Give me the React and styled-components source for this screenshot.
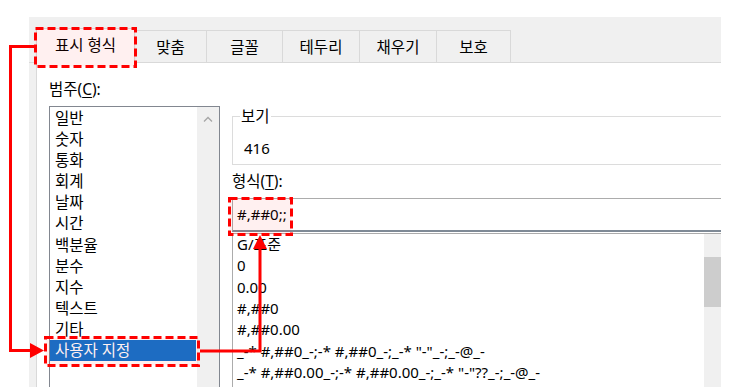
import React from "react";
import styled, { createGlobalStyle } from "styled-components";

const Global = createGlobalStyle`
  html, body { margin: 0; padding: 0; background: #fff; }
  body { font-family: "Noto Sans", "Noto Sans CJK KR", sans-serif; color: #000; }
`;

const Page = styled.div`
  position: relative;
  width: 735px;
  height: 387px;
  overflow: hidden;
  box-sizing: border-box;
  padding: 17px 14px 0 29px;
`;

const Dialog = styled.div`
  height: 100%;
  background: #f0f0f0;
  display: flex;
  flex-direction: column;
`;

const TabBar = styled.div`
  height: 46px;
  box-sizing: border-box;
  display: flex;
  align-items: flex-end;
  padding-left: 8px;
  border-bottom: 1px solid #d9d9d9;
`;

const Tab = styled.div`
  width: ${(p) => p.w}px;
  height: ${(p) => (p.active ? 35 : 32)}px;
  margin-bottom: ${(p) => (p.active ? -1 : 0)}px;
  margin-left: -1px;
  box-sizing: border-box;
  border: 1px solid #d9d9d9;
  border-bottom: none;
  background: ${(p) => (p.active ? "#fff" : "#f0f0f0")};
  display: flex;
  align-items: center;
  justify-content: center;
  font-size: 15.5px;
  padding-bottom: ${(p) => (p.active ? 3 : 0)}px;
`;

const Panel = styled.div`
  flex: 1;
  margin-left: 7px;
  background: #fff;
  border-left: 1px solid #d9d9d9;
  display: grid;
  grid-template-columns: 171px 1fr;
  column-gap: 12px;
  padding-left: 12px;
  min-height: 0;
`;

const Column = styled.div`
  display: flex;
  flex-direction: column;
  padding-top: ${(p) => p.top}px;
  min-height: 0;
`;

const Label = styled.div`
  font-size: 15.5px;
  line-height: 20px;
  margin-top: ${(p) => p.lift || 0}px;
  margin-bottom: ${(p) => p.gap}px;
  u { text-decoration: underline; text-underline-offset: 2px; }
`;

const ListBox = styled.div`
  flex: 1;
  border: 1px solid ${(p) => p.edge};
  border-bottom: none;
  border-right: ${(p) => (p.open ? "none" : `1px solid ${p.edge}`)};
  display: flex;
  min-height: 0;
`;

const Items = styled.div`
  flex: 1;
  padding-top: ${(p) => p.top}px;
`;

const Item = styled.div`
  height: ${(p) => p.h}px;
  line-height: ${(p) => p.h}px;
  font-size: ${(p) => p.size}px;
  padding-left: ${(p) => p.pad}px;
  margin-right: ${(p) => p.right}px;
  white-space: nowrap;
  background: ${(p) => (p.selected ? "#0f73cf" : "transparent")};
  color: ${(p) => (p.selected ? "#fff" : "#000")};
`;

const ScrollTrack = styled.div`
  width: ${(p) => p.w}px;
  background: #f0f0f0;
  display: flex;
  flex-direction: column;
  align-items: center;
`;

const Arrow = styled.div`
  height: 24px;
  display: flex;
  align-items: center;
  justify-content: center;
`;

const Thumb = styled.div`
  width: 100%;
  height: 50px;
  margin-top: 23px;
  background: #cdcdcd;
`;

const Group = styled.fieldset`
  margin: 0;
  padding: 0 0 6px 7px;
  border: 1px solid #dcdcdc;
  border-right: none;
  min-width: 0;
  legend {
    padding: 0 1px;
    font-size: 15.5px;
    line-height: 20px;
  }
`;

const Preview = styled.div`
  font-size: 15px;
  line-height: 20px;
  padding: 12px 0 0 4px;
`;

const Input = styled.div`
  height: 34px;
  box-sizing: border-box;
  border: 1px solid #acacac;
  border-bottom: 2px solid #7f8a96;
  border-right: none;
  font-size: 15px;
  line-height: 30px;
  padding-left: 4px;
  margin-bottom: 1px;
`;

const Overlay = styled.svg`
  position: absolute;
  left: 0;
  top: 0;
  pointer-events: none;
`;

const tabs = [
  ["표시 형식", 99],
  ["맞춤", 73],
  ["글꼴", 77],
  ["테두리", 78],
  ["채우기", 78],
  ["보호", 75],
];

const categories = [
  "일반", "숫자", "통화", "회계", "날짜", "시간", "백분율",
  "분수", "지수", "텍스트", "기타", "사용자 지정",
];

const formats = [
  "G/표준",
  "0",
  "0.00",
  "#,##0",
  "#,##0.00",
  '_-* #,##0_-;-* #,##0_-;_-* "-"_-;_-@_-',
  '_-* #,##0.00_-;-* #,##0.00_-;_-* "-"??_-;_-@_-',
];

const Annotations = () => (
  <Overlay width="735" height="387">
    <g fill="rgba(255,0,0,0.06)" stroke="#ff0000" strokeWidth="3" strokeDasharray="8 4">
      <rect x="35.5" y="28.5" width="100" height="38" />
      <rect x="229.5" y="198.5" width="62" height="36" />
      <rect x="45.5" y="337.5" width="153" height="28" />
    </g>
    <g fill="none" stroke="#ff0000" strokeWidth="3">
      <polyline points="34,46.5 10.5,46.5 10.5,350.5 32,350.5" />
      <polyline points="200,351 260,351 260,247" />
    </g>
    <g fill="#ff0000">
      <polygon points="30,343 44,350.5 30,358" />
      <polygon points="253,249 260,235 267,249" />
    </g>
  </Overlay>
);

export default function App() {
  return (
    <>
      <Global />
      <Page>
        <Dialog>
          <TabBar>
            {tabs.map(([t, w], i) => (
              <Tab key={t} w={w} active={i === 0}>{t}</Tab>
            ))}
          </TabBar>
          <Panel>
            <Column top={16}>
              <Label gap={7}>범주(<u>C</u>):</Label>
              <ListBox edge="#828790">
                <Items top={1}>
                  {categories.map((c) => (
                    <Item key={c} h={21.1} size={15.5} pad={5} right={1} selected={c === "사용자 지정"}>{c}</Item>
                  ))}
                </Items>
                <ScrollTrack w={22}>
                  <Arrow>
                    <svg width="10" height="6" viewBox="0 0 10 6">
                      <path d="M1 5.5 L5 1.5 L9 5.5" fill="none" stroke="#a6a6a6" strokeWidth="1.3" />
                    </svg>
                  </Arrow>
                </ScrollTrack>
              </ListBox>
            </Column>
            <Column top={43}>
              <Group>
                <legend>보기</legend>
                <Preview>416</Preview>
              </Group>
              <Label gap={7} lift={6}>형식(<u>T</u>):</Label>
              <Input>#,##0;;</Input>
              <ListBox edge="#acacac" open>
                <Items top={0}>
                  {formats.map((f) => (
                    <Item key={f} h={21.33} size={15} pad={4} right={0}>{f}</Item>
                  ))}
                </Items>
                <ScrollTrack w={17}>
                  <Thumb />
                </ScrollTrack>
              </ListBox>
            </Column>
          </Panel>
        </Dialog>
        <Annotations />
      </Page>
    </>
  );
}
